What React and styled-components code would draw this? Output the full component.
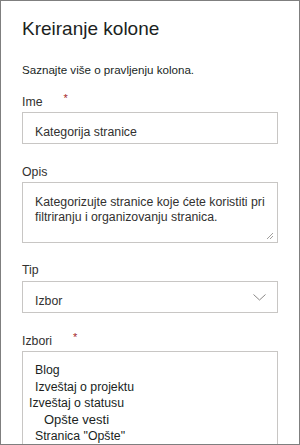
import React from "react";
import styled, { createGlobalStyle } from "styled-components";

const GlobalStyle = createGlobalStyle`
  html, body {
    margin: 0;
    padding: 0;
    background: #ffffff;
  }
  body {
    font-family: "Liberation Sans", Arial, sans-serif;
    color: #323130;
  }
`;

const Panel = styled.div`
  width: 300px;
  height: 445px;
  box-sizing: border-box;
  border: 1px solid #7f7f7f;
  padding: 16px 21px 0;
  overflow: hidden;
  background: #ffffff;
`;

const Title = styled.h1`
  margin: 0;
  font-size: 19px;
  line-height: 24px;
  font-weight: 400;
  color: #201f1e;
`;

const Intro = styled.p`
  margin: 21px 0 0;
  font-size: 11.6px;
  line-height: 16px;
  color: #201f1e;
`;

const Label = styled.div`
  margin: ${(p) => p.$top}px 0 ${(p) => p.$bottom}px;
  font-size: 12.3px;
  line-height: 18px;
  color: #323130;
`;

const Star = styled.span`
  position: relative;
  top: -4px;
  margin-left: 21px;
  font-size: 11px;
  color: #a4262c;
`;

const Field = styled.div`
  position: relative;
  box-sizing: border-box;
  height: ${(p) => p.$height}px;
  border: 1px solid #c8c6c4;
  padding: ${(p) => p.$padTop}px 12px 0 12px;
  font-size: 12.3px;
  line-height: ${(p) => p.$lineHeight}px;
  color: #323130;
`;

const SelectField = styled(Field)`
  display: flex;
  align-items: flex-start;
  justify-content: space-between;
  padding-right: 11px;
`;

const Chevron = styled.svg`
  margin-top: 2px;
  width: 13px;
  height: 7px;
`;

const Grip = styled.svg`
  position: absolute;
  right: 3px;
  bottom: 2px;
  width: 8px;
  height: 8px;
`;

const ChoiceList = styled(Field)`
  height: 120px;
  padding: 10px 0 0 0;
`;

const Choice = styled.div`
  padding-left: ${(p) => p.$indent}px;
  font-size: ${(p) => p.$size}px;
  line-height: 16.5px;
  color: #201f1e;
`;

const choices = [
  { text: "Blog", indent: 12, size: 12.3 },
  { text: "Izveštaj o projektu", indent: 12, size: 12.3 },
  { text: "Izveštaj o statusu", indent: 6, size: 12.3 },
  { text: "Opšte vesti", indent: 21, size: 13 },
  { text: "Stranica \"Opšte\"", indent: 12, size: 12.3 },
];

export default function App() {
  return (
    <>
      <GlobalStyle />
      <Panel>
        <Title>Kreiranje kolone</Title>
        <Intro>Saznajte više o pravljenju kolona.</Intro>

        <Label $top={15} $bottom={1}>
          Ime<Star>*</Star>
        </Label>
        <Field $height={32} $padTop={10} $lineHeight={19}>
          Kategorija stranice
        </Field>

        <Label $top={19} $bottom={1}>
          Opis
        </Label>
        <Field $height={61} $padTop={12} $lineHeight={15}>
          Kategorizujte stranice koje ćete koristiti pri
          <br />
          filtriranju i organizovanju stranica.
          <Grip viewBox="0 0 8 8">
            <path d="M7 1 L1 7 M7 4 L4 7" stroke="#a19f9d" strokeWidth="1" fill="none" />
          </Grip>
        </Field>

        <Label $top={18} $bottom={2}>
          Tip
        </Label>
        <SelectField $height={32} $padTop={10} $lineHeight={19}>
          <span>Izbor</span>
          <Chevron viewBox="0 0 13 7">
            <polyline points="0.5,0.5 6.5,6 12.5,0.5" stroke="#8a8886" strokeWidth="1" fill="none" />
          </Chevron>
        </SelectField>

        <Label $top={19} $bottom={1}>
          Izbori<Star>*</Star>
        </Label>
        <ChoiceList>
          {choices.map((c) => (
            <Choice key={c.text} $indent={c.indent} $size={c.size}>
              {c.text}
            </Choice>
          ))}
        </ChoiceList>
      </Panel>
    </>
  );
}
